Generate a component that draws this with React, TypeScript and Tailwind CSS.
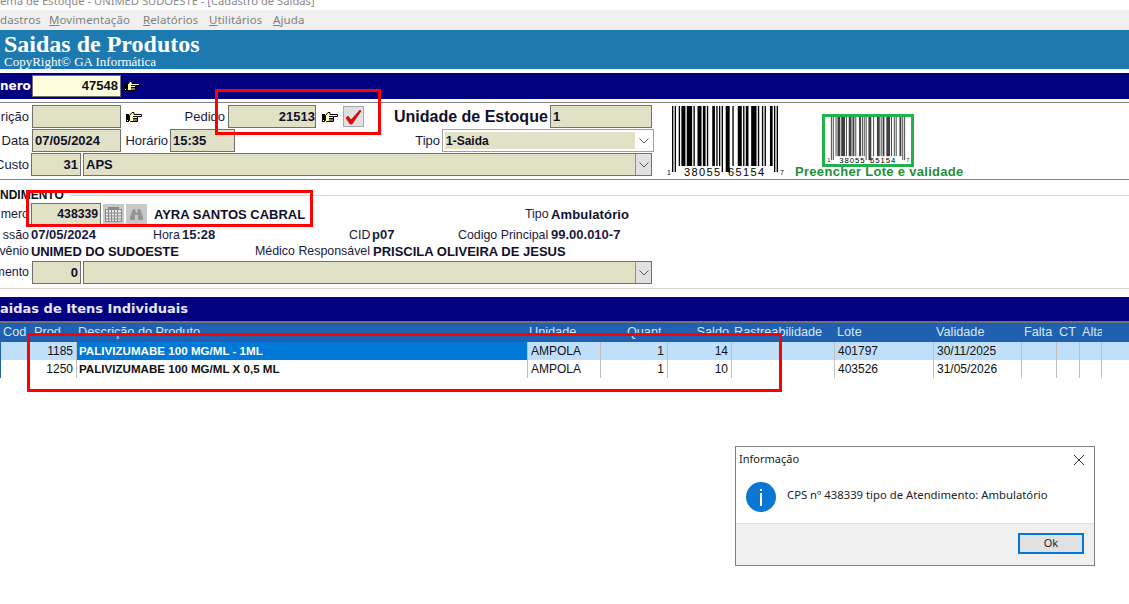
const khaki = "bg-[#e1e1c6]";

function Label({ w, children }: { w: string; children: React.ReactNode }) {
  return <div className={`${w} shrink-0 flex justify-end whitespace-nowrap text-[#1a1a40]`}>{children}</div>;
}

function Hand({ className = "" }: { className?: string }) {
  return (
    <svg width="16" height="12" viewBox="0 0 16 12" className={`shrink-0 ${className}`}>
      <rect x="0" y="3" width="3" height="8" fill="#000" />
      <rect x="1" y="9" width="1" height="1" fill="#ffff99" />
      <path d="M3.5 4.5 L6 1.5 L8 1.5 L8 3.5 L15.5 3.5 L15.5 5.5 L11.5 5.5 L11.5 10.5 L4.5 10.5 L3.5 9.5 Z" fill="#ffffa8" stroke="#000" strokeWidth="1" />
      <path d="M7 5.5 H11 M7 7.5 H11 M7 9 H11" stroke="#000" strokeWidth="1" />
    </svg>
  );
}

function Chevron() {
  return (
    <svg width="10" height="6" viewBox="0 0 10 6">
      <polyline points="0.5,0.5 5,5 9.5,0.5" fill="none" stroke="#555" strokeWidth="1" />
    </svg>
  );
}

function Field({ className, children }: { className: string; children?: React.ReactNode }) {
  return (
    <div className={`${className} h-[23px] shrink-0 border border-[#707070] ${khaki} px-[2px] flex items-center font-bold text-[13px] whitespace-nowrap text-[#10102a]`}>
      {children}
    </div>
  );
}

const barWidths = [
  1, 1, 1, 2, 1, 1, 3, 1, 4, 1, 1, 2, 3, 1, 2, 1, 1, 3, 2, 1, 1, 1, 1, 1, 1, 2, 3, 2, 1, 3, 3, 1, 1, 1, 2, 2, 4, 1, 1, 2,
  1, 1, 1, 3, 2, 1, 1, 1, 1,
];

function Barcode({ width, height, opacity = 1 }: { width: number; height: number; opacity?: number }) {
  const k = 106 / 79;
  let x = 7;
  const bars: React.ReactNode[] = [];
  barWidths.forEach((b, i) => {
    const tall = i < 4 || i > 44 || (i > 22 && i < 28);
    if (i % 2 === 0) bars.push(<rect key={i} x={x} y={0} width={b * k} height={tall ? 66 : 60} fill="#000" fillOpacity={opacity} />);
    x += b * k;
  });
  return (
    <svg width={width} height={height} viewBox="0 0 120 72" preserveAspectRatio="none">
      {bars}
      <text x="2" y="69" fontSize="7" fontFamily="Liberation Sans">1</text>
      <text x="19" y="70" fontSize="11" letterSpacing="1.4" fontFamily="Liberation Sans">38055</text>
      <text x="63" y="70" fontSize="11" letterSpacing="1.4" fontFamily="Liberation Sans">65154</text>
      <text x="115" y="69" fontSize="7" fontFamily="Liberation Sans">7</text>
    </svg>
  );
}

const cols = "grid grid-cols-[30px_47px_451px_73px_67px_64px_103px_99px_88px_35px_23px_22px_1fr]";

function Row({ selected, cod, desc, qty, saldo, lote, val }: { selected?: boolean; cod: string; desc: string; qty: string; saldo: string; lote: string; val: string }) {
  const cell = "border-r border-[#c0c0c0] px-[3px] flex items-center whitespace-nowrap";
  return (
    <div className={`${cols} h-[18px] text-[12px] text-[#111] ${selected ? "bg-[#bfdffb]" : "bg-white"}`}>
      <div className="border-l border-[#2060b0]" />
      <div className={`${cell} justify-end`}>{cod}</div>
      <div className={`${cell} font-bold text-[11.6px] pl-[2px] ${selected ? "bg-[#0078d7] text-white" : ""}`}>{desc}</div>
      <div className={cell}>AMPOLA</div>
      <div className={`${cell} justify-end`}>{qty}</div>
      <div className={`${cell} justify-end`}>{saldo}</div>
      <div className={cell} />
      <div className={cell}>{lote}</div>
      <div className={cell}>{val}</div>
      <div className={cell} />
      <div className={cell} />
      <div className={cell} />
      <div />
    </div>
  );
}

export default function App() {
  return (
    <div className="relative w-[1129px] h-[604px] overflow-hidden bg-white font-['Liberation_Sans',sans-serif] text-[12px]">
      <div className="h-[10px] overflow-hidden font-['Noto_Sans',sans-serif] text-[11.2px] text-[#8a8a8a] leading-[10px] whitespace-nowrap">
        <div className="-mt-[4px]">ema de Estoque - UNIMED SUDOESTE - [Cadastro de Saidas]</div>
      </div>

      <div className="h-[20px] bg-[#f0f0f0] flex items-center font-['Noto_Sans',sans-serif] text-[11.5px] tracking-[0.1px] text-[#808080] whitespace-nowrap">
        <span className="w-[49px]">dastros</span>
        <span className="w-[94px]"><u>M</u>ovimentação</span>
        <span className="w-[66px]"><u>R</u>elatórios</span>
        <span className="w-[64px]"><u>U</u>tilitários</span>
        <span><u>A</u>juda</span>
      </div>

      <div className="h-[39px] bg-[#1c7ab0] pl-[4px] font-['Liberation_Serif',serif] text-white">
        <div className="text-[24px] font-bold leading-[22px] pt-[3px] h-[25px]">Saidas de Produtos</div>
        <div className="text-[13px] leading-[13px]">CopyRight© GA Informática</div>
      </div>

      <div className="mt-[4px] h-[26px] bg-[#000080] flex items-center text-white">
        <div className="w-[27px] text-right font-['DejaVu_Sans',sans-serif] font-bold text-[12px]">nero</div>
        <div className="ml-[5px] w-[89px] h-[22px] bg-[#ffffe0] border border-[#707070] flex items-center justify-end pr-[2px] font-bold text-[#111] text-[13px]">47548</div>
        <Hand className="ml-[3px]" />
      </div>

      <div className="mt-[3px] h-[78px] border-y border-[#808080] flex text-[13px]">
        <div className="w-[665px] shrink-0 pt-[2px] flex flex-col gap-[1px]">
          <div className="flex items-center h-[23px]">
            <Label w="w-[29px]">rição</Label>
            <Field className="ml-[3px] w-[89px]" />
            <Hand className="ml-[5px]" />
            <Label w="w-[83px]">Pedido</Label>
            <Field className="ml-[3px] w-[88px] justify-end pr-[0px]">21513</Field>
            <Hand className="ml-[6px]" />
            <div className="ml-[5px] w-[21px] h-[21px] bg-[#e0e0e0] border border-[#a8a8a8] flex items-center justify-center">
              <svg width="17" height="16" viewBox="0 0 17 16">
                <path d="M1 9 L3 7 L6 11 L15 1 L16 2 L7 15 L5 15 Z" fill="#f00000" stroke="#900000" strokeWidth="0.6" />
              </svg>
            </div>
            <div className="ml-[30px] w-[156px] text-[16px] font-bold text-[#10102a] whitespace-nowrap">Unidade de Estoque</div>
            <Field className="w-[102px] px-[1px]">1</Field>
          </div>
          <div className="flex items-center h-[23px]">
            <Label w="w-[29px]">Data</Label>
            <Field className="ml-[3px] w-[89px]">07/05/2024</Field>
            <Label w="w-[47px]">Horário</Label>
            <Field className="ml-[2px] w-[65px]">15:35</Field>
            <Label w="w-[205px]">Tipo</Label>
            <div className="ml-[2px] w-[212px] h-[23px] border border-[#a0a0a0] bg-white flex items-center pl-[2px]">
              <div className={`w-[190px] h-[17px] ${khaki} font-bold text-[12px] px-[1px] flex items-center text-[#10102a]`}>1-Saida</div>
              <div className="flex-1 flex justify-center"><Chevron /></div>
            </div>
          </div>
          <div className="flex items-center h-[23px]">
            <Label w="w-[29px]">Custo</Label>
            <Field className="ml-[2px] w-[50px] justify-end">31</Field>
            <Field className="ml-[2px] w-[569px] pr-0 justify-between">
              <span>APS</span>
              <span className="w-[16px] h-[21px] bg-[#e1e1e1] border-l border-[#909090] flex items-center justify-center"><Chevron /></span>
            </Field>
          </div>
        </div>
        <div className="w-[120px] shrink-0 pt-[3px]">
          <Barcode width={120} height={72} />
        </div>
        <div className="ml-[10px] pt-[11px] flex flex-col">
          <div className="ml-[27px] shrink-0 w-[92px] h-[53px] border-[3px] border-[#22b14c] pl-[1px] bg-white overflow-hidden">
            <Barcode width={84} height={47} opacity={0.75} />
          </div>
          <div className="-mt-[2px] text-[13px] leading-[14px] font-bold text-[#1f8f3a] whitespace-nowrap tracking-[0.3px]">Preencher Lote e validade</div>
        </div>
      </div>

      <div className="mt-[9px] h-[12px] flex items-center">
        <span className="font-bold text-[#111] w-[70px] shrink-0">NDIMENTO</span>
        <div className="flex-1 h-px bg-[#d8d8d8]" />
      </div>

      <div className="mt-[2px] flex items-center h-[23px] text-[12.4px]">
        <Label w="w-[29px]">mero</Label>
        <Field className="ml-[2px] w-[70px] justify-end">
          <span className="text-[12.2px]">438339</span>
        </Field>
        <div className="ml-[2px] w-[21px] h-[21px] bg-[#c8c8c8] flex items-center justify-center">
          <svg width="17" height="15" viewBox="0 0 17 15">
            <rect x="0.5" y="2.5" width="16" height="12" fill="#e8e8e8" stroke="#8a8a8a" />
            <rect x="3" y="0" width="11" height="2.5" fill="#8a8a8a" />
            <path d="M0 6 H17 M0 9 H17 M0 12 H17 M3.5 3 V15 M6.5 3 V15 M9.5 3 V15 M12.5 3 V15" stroke="#8a8a8a" />
          </svg>
        </div>
        <div className="ml-[2px] w-[21px] h-[21px] bg-[#c8c8c8] flex items-center justify-center">
          <svg width="13" height="11" viewBox="0 0 13 11">
            <path d="M3 0 H5 L6 4 H7 L8 0 H10 L13 8 V11 H8 V6 H5 V11 H0 V8 Z" fill="#959595" />
          </svg>
        </div>
        <div className="ml-[7px] w-[371px] text-[13px] font-bold text-[#10102a] whitespace-nowrap">AYRA SANTOS CABRAL</div>
        <div className="w-[26px] text-[#1a1a40]">Tipo</div>
        <div className="text-[13px] font-bold text-[#10102a] whitespace-nowrap tracking-[0.15px]">Ambulatório</div>
      </div>

      <div className="flex items-center h-[16px] mt-[1px] whitespace-nowrap text-[#1a1a40] text-[12.4px]">
        <Label w="w-[29px]">ssão</Label>
        <b className="ml-[2px] w-[122px] text-[13px]">07/05/2024</b>
        <span className="w-[29px]">Hora</span>
        <b className="w-[167px] text-[13px]">15:28</b>
        <span className="w-[23px]">CID</span>
        <b className="w-[86px] text-[13px]">p07</b>
        <span className="w-[93px]">Codigo Principal</span>
        <b className="text-[13px]">99.00.010-7</b>
      </div>
      <div className="flex items-center h-[17px] whitespace-nowrap text-[#1a1a40] text-[12.4px]">
        <Label w="w-[29px]">vênio</Label>
        <b className="ml-[2px] w-[224px] text-[13px] tracking-[-0.1px] text-[#10102a]">UNIMED DO SUDOESTE</b>
        <span className="w-[118px]">Médico Responsável</span>
        <b className="text-[13px] text-[#10102a]">PRISCILA OLIVEIRA DE JESUS</b>
      </div>

      <div className="mt-[1px] flex items-center h-[23px] text-[12.4px]">
        <Label w="w-[29px]">mento</Label>
        <Field className="ml-[3px] w-[49px] justify-end text-[#1a1a80]">0</Field>
        <Field className="ml-[2px] w-[569px] pr-0 justify-end">
          <span className="w-[16px] h-[21px] bg-[#e1e1e1] border-l border-[#909090] flex items-center justify-center"><Chevron /></span>
        </Field>
      </div>

      <div className="mt-[4px] h-px bg-[#d8d8d8]" />

      <div className="mt-[8px] h-[24px] bg-[#000080] flex items-center font-['DejaVu_Sans',sans-serif] font-bold text-[13px] text-[#e8e8f8] whitespace-nowrap">
        aidas de Itens Individuais
      </div>
      <div className={`${cols} h-[21px] border-t-2 border-[#707070] bg-[#2060b0] text-[#d8e8f4] text-[12.7px] whitespace-nowrap items-center`}>
        <div className="pl-[3px]">Cod</div>
        <div className="pl-[4px]">Prod.</div>
        <div className="pl-[1px]">Descrição do Produto</div>
        <div className="pl-[1px]">Unidade</div>
        <div className="text-right pr-[3px]">Quant.</div>
        <div className="text-right pr-[3px]">Saldo</div>
        <div className="pl-[2px]">Rastreabilidade</div>
        <div className="pl-[2px]">Lote</div>
        <div className="pl-[2px]">Validade</div>
        <div className="pl-[2px]">Falta</div>
        <div className="pl-[2px]">CT</div>
        <div className="pl-[2px] overflow-hidden">Alta</div>
        <div />
      </div>
      <Row selected cod="1185" desc="PALIVIZUMABE 100 MG/ML - 1ML" qty="1" saldo="14" lote="401797" val="30/11/2025" />
      <Row cod="1250" desc="PALIVIZUMABE 100 MG/ML X 0,5 ML" qty="1" saldo="10" lote="403526" val="31/05/2026" />

      {/* marcações vermelhas por cima da tela */}
      <div className="absolute left-[215px] top-[89px] w-[166px] h-[46px] border-[3px] border-[#ff0000]" />
      <div className="absolute left-[26px] top-[190px] w-[287px] h-[37px] border-[3px] border-[#ff0000]" />
      <div className="absolute left-[27px] top-[333px] w-[755px] h-[59px] border-[3px] border-[#ff0000]" />

      <div className="absolute left-[735px] top-[446px] w-[360px] h-[120px] border border-[#808080] bg-white flex flex-col font-['Noto_Sans',sans-serif] text-[#222]">
        <div className="h-[25px] flex items-center justify-between pl-[3px] pr-[9px] text-[11px]">
          <span>Informação</span>
          <svg width="12" height="12" viewBox="0 0 12 12">
            <path d="M1 1 L11 11 M11 1 L1 11" stroke="#333" strokeWidth="1" />
          </svg>
        </div>
        <div className="flex-1 flex items-center pl-[10px] pb-[1px] text-[11.3px]">
          <div className="w-[30px] h-[30px] rounded-full bg-[#0a78d2] flex items-center justify-center">
            <div className="flex flex-col items-center gap-[2px]">
              <div className="w-[2px] h-[2px] bg-white" />
              <div className="w-[2px] h-[13px] bg-white" />
            </div>
          </div>
          <span className="ml-[11px] -mt-[4px]">CPS nº 438339 tipo de Atendimento: Ambulatório</span>
        </div>
        <div className="h-[42px] bg-[#f0f0f0] border-t border-[#dfdfdf] flex items-center justify-end pr-[10px] pb-[2px]">
          <div className="w-[66px] h-[21px] border-2 border-[#0078d7] bg-[#e1e1e1] flex items-center justify-center text-[11px]">Ok</div>
        </div>
      </div>
    </div>
  );
}
